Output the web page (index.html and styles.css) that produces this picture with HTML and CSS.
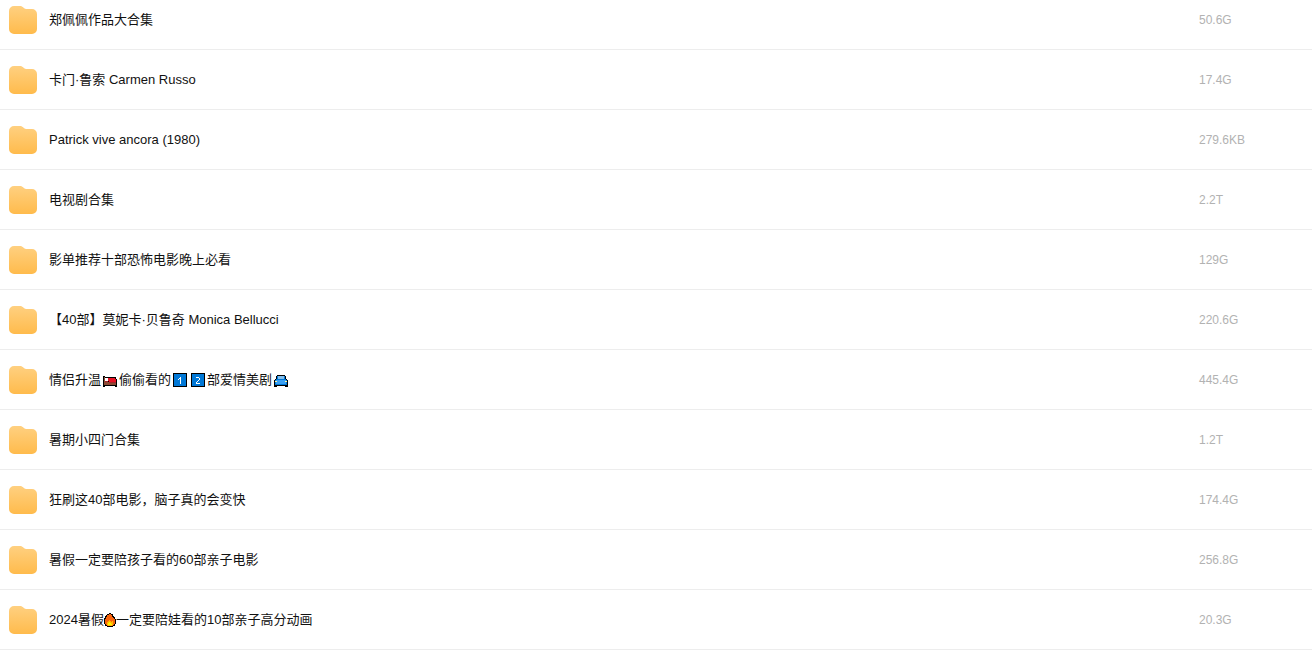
FILE: index.html
```html
<!DOCTYPE html>
<html lang="zh-CN">
<head>
  <meta charset="UTF-8" />
  <meta name="viewport" content="width=device-width, initial-scale=1.0"/>
  <title>文件列表</title>
  <link rel="stylesheet" href="styles.css">
</head>
<body>

  <!-- Shared icons -->
  <svg class="sprite" aria-hidden="true">
    <defs>
      <linearGradient id="folderFill" x1="0" y1="0" x2="0" y2="1">
        <stop offset="0" stop-color="#ffd080"/>
        <stop offset="1" stop-color="#ffbb4c"/>
      </linearGradient>
      <symbol id="folder" viewBox="0 0 28 28">
        <path fill="url(#folderFill)" d="M5 0H11C12.2 0 13 .4 13.8 1.1L15.2 2.3C15.8 2.8 16.4 3 17.2 3H23A5 5 0 0 1 28 8V23A5 5 0 0 1 23 28H5A5 5 0 0 1 0 23V5A5 5 0 0 1 5 0Z"/>
      </symbol>
    </defs>
  </svg>

  <table class="file-list">
    <tbody>
      <tr>
        <td><div class="file"><svg class="folder"><use href="#folder"/></svg><span class="name">郑佩佩作品大合集</span></div></td>
        <td class="size">50.6G</td>
      </tr>
      <tr>
        <td><div class="file"><svg class="folder"><use href="#folder"/></svg><span class="name">卡门·鲁索 Carmen Russo</span></div></td>
        <td class="size">17.4G</td>
      </tr>
      <tr>
        <td><div class="file"><svg class="folder"><use href="#folder"/></svg><span class="name">Patrick vive ancora (1980)</span></div></td>
        <td class="size">279.6KB</td>
      </tr>
      <tr>
        <td><div class="file"><svg class="folder"><use href="#folder"/></svg><span class="name">电视剧合集</span></div></td>
        <td class="size">2.2T</td>
      </tr>
      <tr>
        <td><div class="file"><svg class="folder"><use href="#folder"/></svg><span class="name">影单推荐十部恐怖电影晚上必看</span></div></td>
        <td class="size">129G</td>
      </tr>
      <tr>
        <td><div class="file"><svg class="folder"><use href="#folder"/></svg><span class="name">【40部】莫妮卡·贝鲁奇 Monica Bellucci</span></div></td>
        <td class="size">220.6G</td>
      </tr>
      <tr>
        <td>
          <div class="file"><svg class="folder"><use href="#folder"/></svg><span class="name">情侣升温<svg class="emoji" viewBox="0 0 14 14" shape-rendering="crispEdges" role="img" aria-label="床">
              <path fill="#000" d="M0 3h2v1h11v2h1v8h-2v-1H2v1H0z"/>
              <path fill="#8b4a35" d="M1 4h1v5h11v3H1z"/>
              <path fill="#fff" d="M2 5h3v3H2z"/>
              <path fill="#e81224" d="M5 5h7v1h1v4H6V8H5z"/>
              <path fill="#a4262c" d="M2 8h3v1H2zM6 9h7v1H6z"/>
            </svg>偷偷看的<svg class="emoji" viewBox="0 0 14 14" shape-rendering="crispEdges" role="img" aria-label="1">
              <path fill="#000" d="M0 0h14v14H0z"/>
              <path fill="#0078d7" d="M1 1h12v12H1z"/>
              <path fill="#fff" d="M7 4h1v7H7zM6 5h1v1H6zM5 6h1v1H5z"/>
            </svg><svg class="emoji" viewBox="0 0 14 14" shape-rendering="crispEdges" role="img" aria-label="2">
              <path fill="#000" d="M0 0h14v14H0z"/>
              <path fill="#0078d7" d="M1 1h12v12H1z"/>
              <path fill="#fff" d="M5 4h3v1H5zM8 5h1v2H8zM7 7h1v1H7zM6 8h1v1H6zM5 9h1v1H5zM5 10h4v1H5z"/>
            </svg>部爱情美剧<svg class="emoji" viewBox="0 0 14 14" shape-rendering="crispEdges" role="img" aria-label="汽车">
              <path fill="#000" d="M3 2h8v1h1v3h1v1h1v7h-3v-1H3v1H0V7h1V6h1V3h1z"/>
              <path fill="#0078d7" d="M3 3h8v3h1v1h1v5H1V7h1V6h1z"/>
              <path fill="#83beec" d="M4 3h6v3H4z"/>
              <path fill="#3aa0f3" d="M2 7h10v4H2z"/>
              <path fill="#fff8a0" d="M1 8h2v1H1zM11 8h2v1h-2z"/>
            </svg></span></div>
        </td>
        <td class="size">445.4G</td>
      </tr>
      <tr>
        <td><div class="file"><svg class="folder"><use href="#folder"/></svg><span class="name">暑期小四门合集</span></div></td>
        <td class="size">1.2T</td>
      </tr>
      <tr>
        <td><div class="file"><svg class="folder"><use href="#folder"/></svg><span class="name">狂刷这40部电影，脑子真的会变快</span></div></td>
        <td class="size">174.4G</td>
      </tr>
      <tr>
        <td><div class="file"><svg class="folder"><use href="#folder"/></svg><span class="name">暑假一定要陪孩子看的60部亲子电影</span></div></td>
        <td class="size">256.8G</td>
      </tr>
      <tr>
        <td>
          <div class="file"><svg class="folder"><use href="#folder"/></svg><span class="name">2024暑假<svg class="emoji emoji-tight" viewBox="0 0 12 14" shape-rendering="crispEdges" role="img" aria-label="火">
              <path fill="#000" d="M5 0h2v1h2v2h1v1h1v2h1v5h-1v2H9v1H3v-1H1v-2H0V5h1V3h1V2h1V1h2z"/>
              <path fill="#f7630c" d="M5 1h2v1h1v2h1v1h1v1h1v5h-1v1H9v1H3v-1H2v-1H1V6h1V4h1V2h2z"/>
              <path fill="#ffb900" d="M5 7h1v1h1v1h1V8h1v4H8v1H4v-1H3V9h1V8h1z"/>
              <path fill="#fff100" d="M5 9h1v1h1v1h1v1H4v-2h1z"/>
            </svg>一定要陪娃看的10部亲子高分动画</span></div>
        </td>
        <td class="size">20.3G</td>
      </tr>
    </tbody>
  </table>

</body>
</html>
```
FILE: styles.css
```css
body {
  margin: 0;
  background: #fff;
  color: #111;
  font-family: "Liberation Sans", "Noto Sans CJK SC", sans-serif;
  font-size: 13px;
  line-height: 20px;
  overflow: hidden;
}
.sprite {
  position: absolute;
  width: 0;
  height: 0;
}
/* the list is scrolled slightly past its first row's top edge */
.file-list {
  width: 100%;
  margin-top: -10px;
  border-collapse: separate;
  border-spacing: 0;
}
.file-list td {
  box-sizing: border-box;
  height: 60px;
  padding: 0;
  border-bottom: 1px solid #ededed;
}
.file {
  display: flex;
  align-items: center;
  gap: 12px;
  padding: 1px 0 0 9px;
}
.folder {
  flex: none;
  width: 28px;
  height: 28px;
}
.name {
  white-space: nowrap;
}
.emoji {
  width: 14px;
  height: 14px;
  margin: 0 2px;
  vertical-align: -3px;
}
.emoji-tight {
  width: 12px;
  margin: 0;
}
.file-list .size {
  width: 113px;
  color: #b2b2b2;
  font-size: 12px;
}
```
